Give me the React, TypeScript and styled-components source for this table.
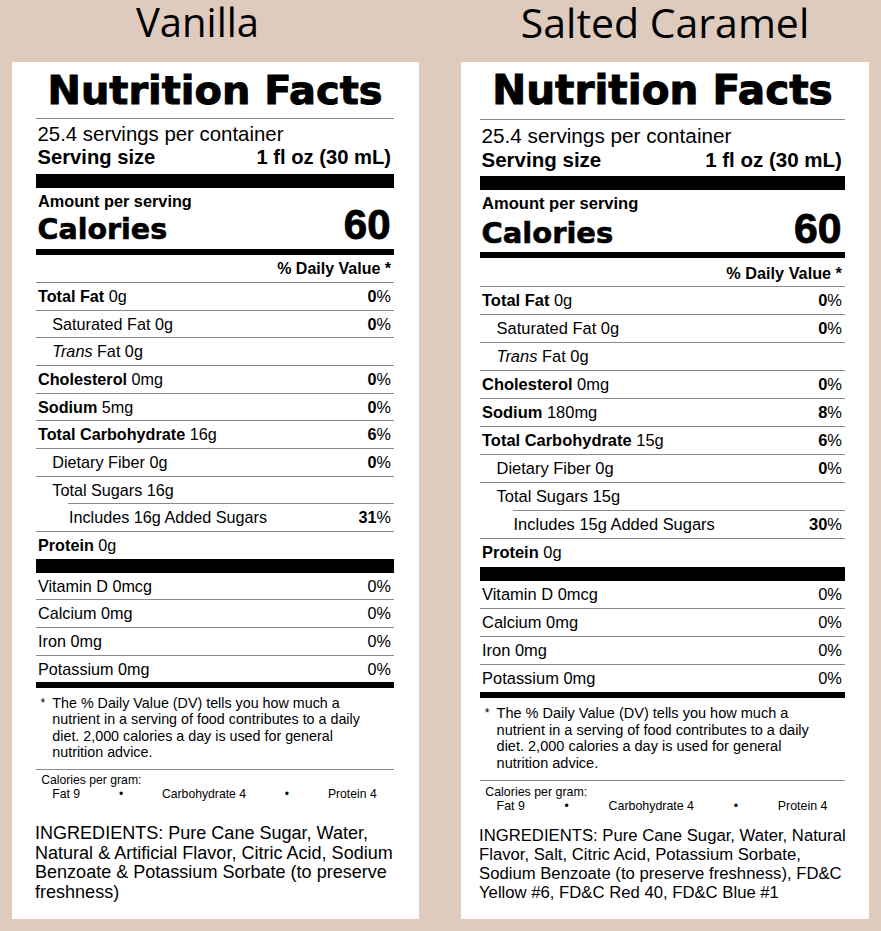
import React from 'react';
import styled, { createGlobalStyle } from 'styled-components';

const v = (n: number) => `calc(${n}px * var(--s))`;
const RULE = '#8a8a8a';

const Global = createGlobalStyle`
  html, body { margin: 0; padding: 0; background: #dfcbbd; }
  body { font-family: "Liberation Sans", Arial, Helvetica, sans-serif; color: #000; }
`;

const Page = styled.main`
  width: 881px;
  height: 931px;
  box-sizing: border-box;
  padding: 0 12px 12px;
  display: grid;
  grid-template-columns: 407px 408px;
  column-gap: 42px;
  background: #dfcbbd;
`;

const Column = styled.section`
  display: flex;
  flex-direction: column;
`;

const Title = styled.h2<{ $size: number; $shift: number }>`
  margin: 0;
  height: 62px;
  flex: none;
  line-height: 44px;
  text-align: center;
  font-family: "Open Sans", sans-serif;
  font-weight: 400;
  font-size: ${(p) => p.$size}px;
  padding-right: ${(p) => p.$shift}px;
  color: #000;
`;

const Card = styled.article<{ $s: number; $padL: number; $padR: number }>`
  --s: ${(p) => p.$s};
  flex: 1;
  background: #fff;
  padding: 0 ${(p) => p.$padR}px 0 ${(p) => p.$padL}px;
  display: flex;
  flex-direction: column;
`;

const Heading = styled.h1`
  margin: 0;
  text-align: center;
  font-family: "DejaVu Sans", sans-serif;
  font-weight: 700;
  font-size: ${v(39.9)};
  line-height: ${v(48)};
  padding: ${v(4.3)} 0 ${v(3.7)};
  border-bottom: 1px solid ${RULE};
  white-space: nowrap;
  -webkit-text-stroke: 1px #000;
`;

const Servings = styled.div`
  padding: ${v(4.2)} ${v(3)} 0 ${v(1.5)};
  font-size: ${v(20.4)};
  line-height: ${v(23)};
`;

const ServingSize = styled.div`
  display: flex;
  justify-content: space-between;
  font-weight: 700;
  font-size: ${v(20.2)};
`;

const Bar = styled.div<{ $h: number; $mt?: number }>`
  flex: none;
  height: ${(p) => v(p.$h)};
  margin-top: ${(p) => v(p.$mt ?? 0)};
  background: #000;
`;

const Amount = styled.div`
  padding: ${v(3.9)} 0 0 ${v(2)};
  font-weight: 700;
  font-size: ${v(16.3)};
  line-height: ${v(19)};
`;

const CaloriesRow = styled.div`
  display: flex;
  justify-content: space-between;
  align-items: baseline;
  padding: 0 ${v(3.5)} 0 ${v(1.5)};
`;

const CaloriesLabel = styled.span`
  font-family: "DejaVu Sans", sans-serif;
  font-weight: 700;
  font-size: ${v(28.5)};
  line-height: ${v(38)};
  -webkit-text-stroke: 0.6px #000;
`;

const CaloriesValue = styled.span`
  font-family: "Liberation Sans", Arial, sans-serif;
  font-weight: 700;
  font-size: ${v(42)};
  line-height: ${v(28.6)};
  -webkit-text-stroke: 0.9px #000;
`;

const DvHeader = styled.div`
  padding: ${v(4.2)} ${v(3)} ${v(2.8)} 0;
  text-align: right;
  font-weight: 700;
  font-size: ${v(16)};
  line-height: ${v(20)};
  border-bottom: 1px solid ${RULE};
`;

const Row = styled.div<{ $indent?: number; $rule?: boolean; $inset?: number }>`
  display: flex;
  justify-content: space-between;
  align-items: baseline;
  height: ${v(26.65)};
  line-height: ${v(26.65)};
  padding: 0 ${v(3)} ${(p) => (p.$rule ? '1px' : '0')} calc(${v(2)} + ${(p) => v(p.$indent ?? 0)});
  font-size: ${v(16.2)};
  white-space: nowrap;
  background: ${(p) =>
    p.$rule
      ? `linear-gradient(${RULE}, ${RULE}) right bottom / calc(100% - ${v(p.$inset ?? 0)}) 1px no-repeat`
      : 'none'};
`;

const Strong = styled.span`
  font-weight: 700;
`;

const Em = styled.i`
  font-style: italic;
`;

const Footnote = styled.div`
  display: grid;
  grid-template-columns: ${v(16.3)} 1fr;
  padding: ${v(6.4)} 0 ${v(8.25)};
  font-size: ${v(14.3)};
  line-height: ${v(16.4)};
  border-bottom: 1px solid ${RULE};
  white-space: nowrap;
`;

const Asterisk = styled.span`
  padding-left: ${v(4.6)};
  font-size: ${v(12)};
`;

const PerGram = styled.div`
  padding-top: ${v(3.77)};
  font-size: ${v(12.2)};
  line-height: ${v(14)};
`;

const PerGramTitle = styled.div`
  padding-left: ${v(5.2)};
`;

const PerGramList = styled.div`
  display: flex;
  justify-content: space-between;
  padding: 0 ${v(17.3)} 0 ${v(16.3)};
`;

const Ingredients = styled.p<{ $fs: number; $lh: number; $mt: number }>`
  margin: ${(p) => p.$mt}px 0 0 -1px;
  font-size: ${(p) => p.$fs}px;
  line-height: ${(p) => p.$lh}px;
  white-space: nowrap;
`;

type Nutrient = {
  name: string;
  amount: string;
  dv?: string;
  bold?: boolean;
  indent?: number;
  italic?: string;
  inset?: number;
};

type Product = {
  title: string;
  titleSize: number;
  titleShift: number;
  s: number;
  padL: number;
  padR: number;
  nutrients: Nutrient[];
  ingredients: string[];
  ingFs: number;
  ingLh: number;
  ingMt: number;
};

const vitamins = [
  ['Vitamin D', '0mcg'],
  ['Calcium', '0mg'],
  ['Iron', '0mg'],
  ['Potassium', '0mg'],
];

const makeNutrients = (sodium: string, sodiumDv: string, carb: string, sugars: string, added: string, addedDv: string): Nutrient[] => [
  { name: 'Total Fat', amount: '0g', dv: '0', bold: true },
  { name: 'Saturated Fat', amount: '0g', dv: '0', indent: 14.3 },
  { name: 'Fat', italic: 'Trans', amount: '0g', indent: 14.3 },
  { name: 'Cholesterol', amount: '0mg', dv: '0', bold: true },
  { name: 'Sodium', amount: sodium, dv: sodiumDv, bold: true },
  { name: 'Total Carbohydrate', amount: carb, dv: '6', bold: true },
  { name: 'Dietary Fiber', amount: '0g', dv: '0', indent: 14.3 },
  { name: 'Total Sugars', amount: sugars, indent: 14.3, inset: 32.3 },
  { name: `Includes ${added} Added Sugars`, amount: '', dv: addedDv, indent: 31 },
  { name: 'Protein', amount: '0g', bold: true },
];

const products: Product[] = [
  {
    title: 'Vanilla',
    titleSize: 40,
    titleShift: 36,
    s: 1,
    padL: 24,
    padR: 25,
    nutrients: makeNutrients('5mg', '0', '16g', '16g', '16g', '31'),
    ingredients: [
      'INGREDIENTS: Pure Cane Sugar, Water,',
      'Natural & Artificial Flavor, Citric Acid, Sodium',
      'Benzoate & Potassium Sorbate (to preserve',
      'freshness)',
    ],
    ingFs: 18.05,
    ingLh: 19.4,
    ingMt: 23,
  },
  {
    title: 'Salted Caramel',
    titleSize: 41,
    titleShift: 0,
    s: 1.0165,
    padL: 19,
    padR: 24,
    nutrients: makeNutrients('180mg', '8', '15g', '15g', '15g', '30'),
    ingredients: [
      'INGREDIENTS: Pure Cane Sugar, Water, Natural',
      'Flavor, Salt, Citric Acid, Potassium Sorbate,',
      'Sodium Benzoate (to preserve freshness), FD&C',
      'Yellow #6, FD&C Red 40, FD&C Blue #1',
    ],
    ingFs: 16.7,
    ingLh: 19.1,
    ingMt: 12.4,
  },
];

function NutrientRow({ n, last }: { n: Nutrient; last: boolean }) {
  const label = n.bold ? <Strong>{n.name}</Strong> : n.name;
  return (
    <Row $indent={n.indent} $rule={!last} $inset={n.inset}>
      <span>
        {n.italic && <Em>{n.italic} </Em>}
        {label}
        {n.amount && ` ${n.amount}`}
      </span>
      {n.dv !== undefined && (
        <span>
          <Strong>{n.dv}</Strong>%
        </span>
      )}
    </Row>
  );
}

function Label({ p }: { p: Product }) {
  return (
    <Card $s={p.s} $padL={p.padL} $padR={p.padR}>
      <Heading>Nutrition Facts</Heading>
      <Servings>
        <div>25.4 servings per container</div>
        <ServingSize>
          <span>Serving size</span>
          <span>1 fl oz (30 mL)</span>
        </ServingSize>
      </Servings>
      <Bar $h={14.3} $mt={4.8} />
      <Amount>Amount per serving</Amount>
      <CaloriesRow>
        <CaloriesLabel>Calories</CaloriesLabel>
        <CaloriesValue>60</CaloriesValue>
      </CaloriesRow>
      <Bar $h={6} />
      <DvHeader>% Daily Value *</DvHeader>
      {p.nutrients.map((n, i) => (
        <NutrientRow key={n.name} n={n} last={i === p.nutrients.length - 1} />
      ))}
      <Bar $h={14.3} />
      {vitamins.map(([name, amt], i) => (
        <Row key={name} $rule={i < vitamins.length - 1}>
          <span>
            {name} {amt}
          </span>
          <span>0%</span>
        </Row>
      ))}
      <Bar $h={6} />
      <Footnote>
        <Asterisk>*</Asterisk>
        <span>
          The % Daily Value (DV) tells you how much a<br />
          nutrient in a serving of food contributes to a daily<br />
          diet. 2,000 calories a day is used for general<br />
          nutrition advice.
        </span>
      </Footnote>
      <PerGram>
        <PerGramTitle>Calories per gram:</PerGramTitle>
        <PerGramList>
          <span>Fat 9</span>
          <span>•</span>
          <span>Carbohydrate 4</span>
          <span>•</span>
          <span>Protein 4</span>
        </PerGramList>
      </PerGram>
      <Ingredients $fs={p.ingFs} $lh={p.ingLh} $mt={p.ingMt}>
        {p.ingredients.map((line, i) => (
          <React.Fragment key={i}>
            {line}
            {i < p.ingredients.length - 1 && <br />}
          </React.Fragment>
        ))}
      </Ingredients>
    </Card>
  );
}

export default function App() {
  return (
    <>
      <Global />
      <Page>
        {products.map((p) => (
          <Column key={p.title}>
            <Title $size={p.titleSize} $shift={p.titleShift}>
              {p.title}
            </Title>
            <Label p={p} />
          </Column>
        ))}
      </Page>
    </>
  );
}
